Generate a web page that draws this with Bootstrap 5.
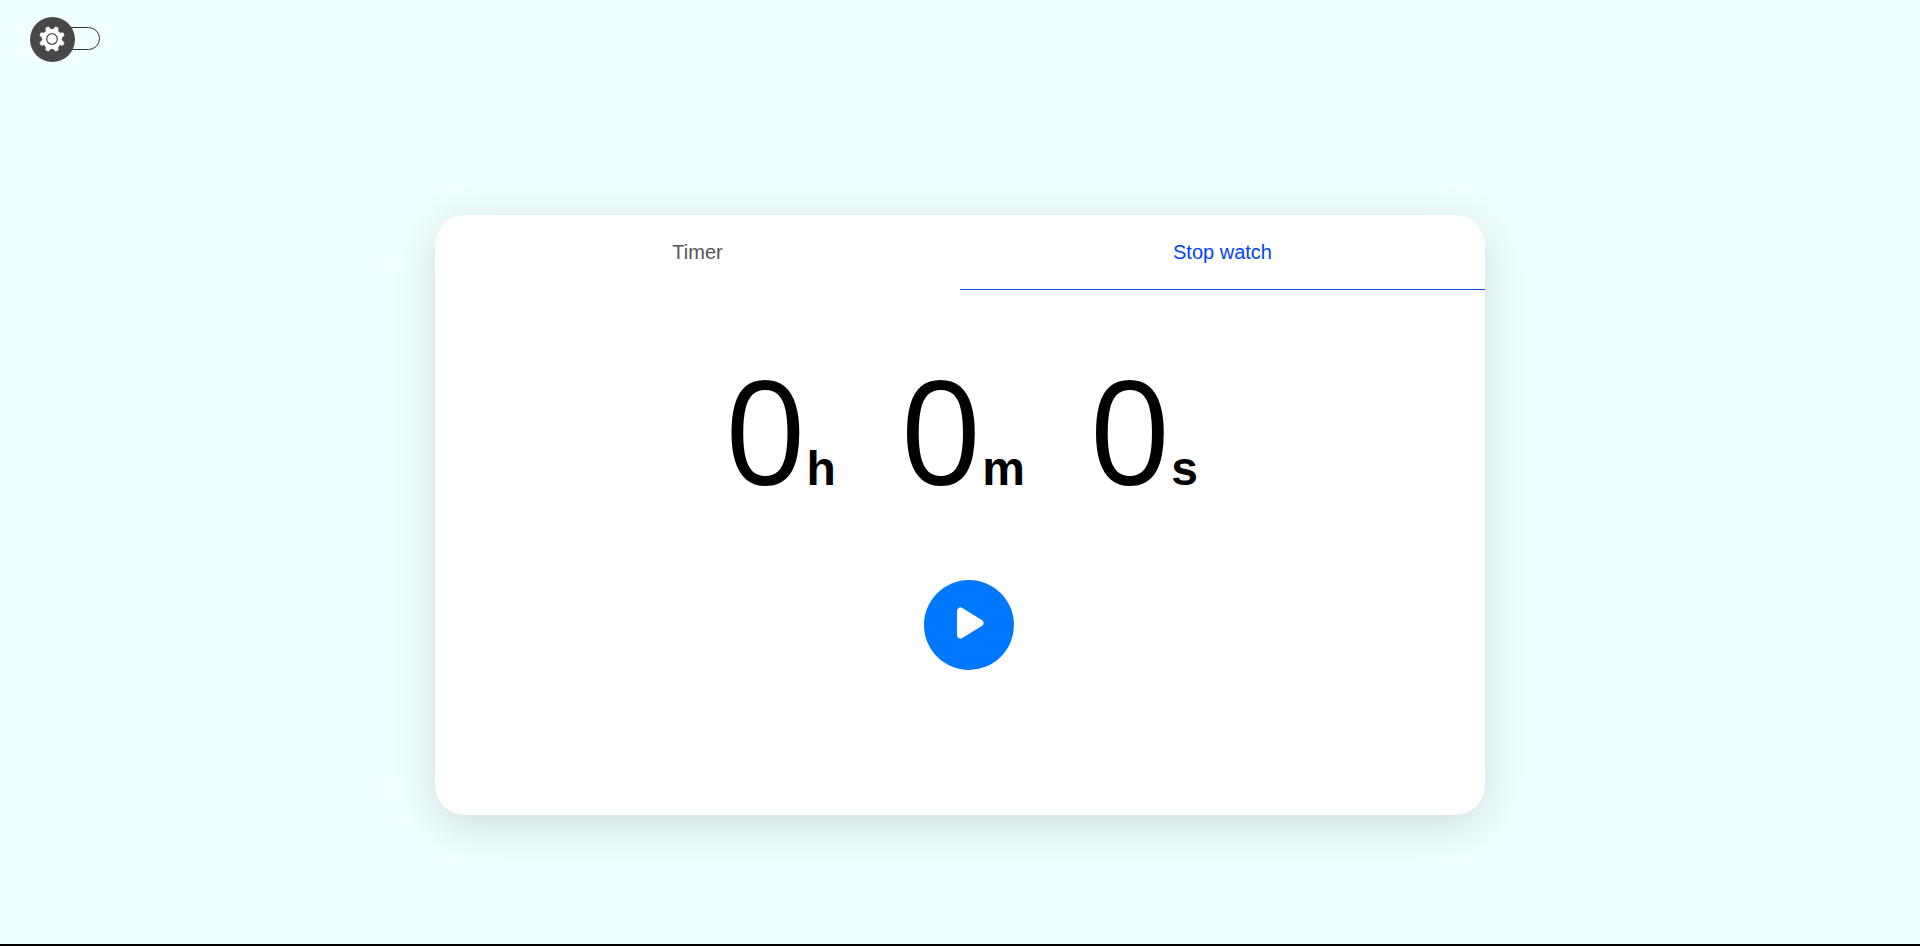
<!DOCTYPE html>
<html lang="en">
<head>
<meta charset="utf-8">
<meta name="viewport" content="width=device-width, initial-scale=1">
<title>Stop watch</title>
<link href="https://cdn.jsdelivr.net/npm/bootstrap@5.3.0/dist/css/bootstrap.min.css" rel="stylesheet">
<style>
  body { font-family: "Liberation Sans", Arial, sans-serif; background: #f0ffff; color: #000; border-bottom: 2px solid #000; }
  .theme-bar { padding: 17px 30px 0; }
  .theme-switch { width: 70px; height: 45px; cursor: pointer; }
  .track { width: 50px; height: 23px; margin: 0 0 2px 20px; border: 1px solid #333; border-radius: 12px; }
  .knob { width: 45px; height: 45px; padding: 0 1px 1px 0; background: #484848; }
  .clock-card { max-width: 1050px; min-height: 600px; border-radius: 30px; box-shadow: 0 10px 44px rgba(0, 0, 0, .14); }
  .clock-tabs .nav-link { height: 75px; padding: 0; line-height: 24px; font-size: 20px; color: #555; background: none; border: 0; border-bottom: 1px solid transparent; border-radius: 0; }
  .clock-tabs .nav-link.active { color: #04f; border-bottom-color: #0d50e8; }
  .readout { gap: 64px; padding: 55px 0 0 2px; }
  .digit { font-family: "Open Sans", "Noto Sans", sans-serif; font-size: 144px; font-weight: 500; line-height: 168px; }
  .unit { font-size: 48px; font-weight: 700; }
  .play { width: 90px; height: 90px; margin: 67px 0 0 18px; background: #07f; }
</style>
</head>
<body class="min-vh-100 d-flex flex-column">
  <header class="theme-bar">
    <label class="theme-switch position-relative d-flex align-items-center">
      <input type="checkbox" class="visually-hidden" aria-label="Dark theme">
      <span class="track"></span>
      <span class="knob rounded-circle position-absolute start-0 top-0 d-flex align-items-center justify-content-center">
        <svg width="26" height="26" viewBox="-13 -13 26 26" aria-hidden="true">
          <path fill="#fff" stroke="#fff" stroke-width=".6" stroke-linejoin="round" d="M12.200 3.600L11.100 6.200Q4.800 4.800 6.200 11.100L3.600 12.200Q0 6.600-3.600 12.200L-6.200 11.100Q-4.800 4.800-11.100 6.200L-12.200 3.600Q-6.600 0-12.200-3.600L-11.100-6.200Q-4.800-4.800-6.200-11.100L-3.600-12.200Q0-6.600 3.600-12.200L6.200-11.100Q4.800-4.800 11.100-6.200L12.200-3.600Q6.600 0 12.200 3.600Z"/>
          <circle r="5.300" fill="none" stroke="#484848" stroke-width="1.200"/>
        </svg>
      </span>
    </label>
  </header>
  <main class="flex-grow-1 d-flex align-items-center px-3 pt-4">
    <section class="clock-card bg-white w-100 mx-auto overflow-hidden">
      <div class="clock-tabs nav nav-justified" role="tablist">
        <button class="nav-link flex-fill w-50" type="button" role="tab" aria-selected="false">Timer</button>
        <button class="nav-link active flex-fill w-50" type="button" role="tab" aria-selected="true">Stop watch</button>
      </div>
      <div class="readout d-flex flex-wrap justify-content-center">
        <div class="d-flex align-items-baseline"><span class="digit">0</span><span class="unit">h</span></div>
        <div class="d-flex align-items-baseline"><span class="digit">0</span><span class="unit">m</span></div>
        <div class="d-flex align-items-baseline"><span class="digit">0</span><span class="unit">s</span></div>
      </div>
      <div class="d-flex justify-content-center">
        <button class="play btn rounded-circle border-0 p-0" type="button" aria-label="Start">
          <svg class="d-block mx-auto" width="30" height="36" viewBox="0 0 30 36" aria-hidden="true"><path d="M6.500 4V28L26 16Z" fill="#fff" stroke="#fff" stroke-width="7" stroke-linejoin="round"/></svg>
        </button>
      </div>
    </section>
  </main>
<script src="https://cdn.jsdelivr.net/npm/bootstrap@5.3.0/dist/js/bootstrap.bundle.min.js"></script>
</body>
</html>
